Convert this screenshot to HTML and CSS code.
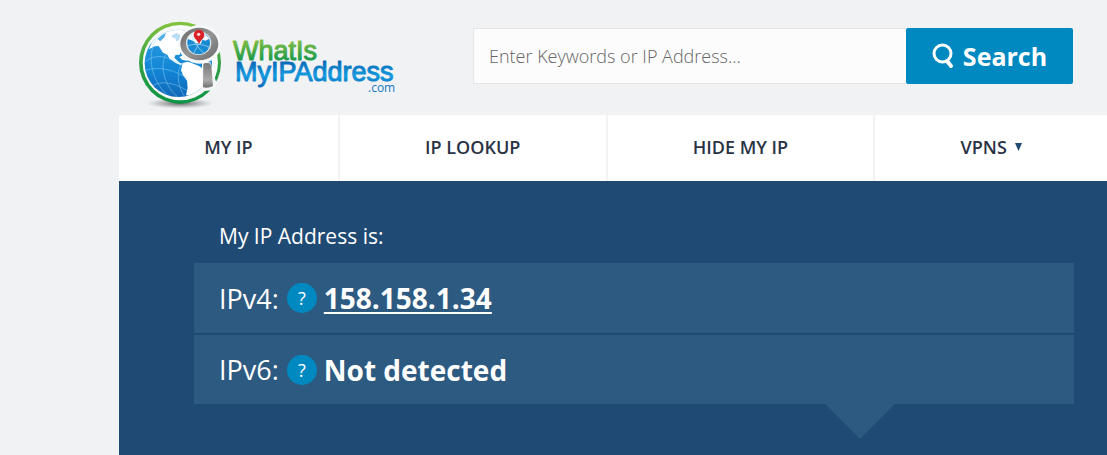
FILE: index.html
```html
<!DOCTYPE html>
<html lang="en">
<head>
<meta charset="utf-8">
<title>What Is My IP Address</title>
<link rel="stylesheet" href="styles.css">
</head>
<body>
<div class="page">
  <header class="header">
    <a class="logo" href="#" aria-label="WhatIsMyIPAddress.com">
      <svg class="logo-art" viewBox="0 0 275 100" width="275" height="100">
        <defs>
          <linearGradient id="ring" x1="0" y1="0" x2="0" y2="1"><stop offset="0" stop-color="#84c340"/><stop offset=".55" stop-color="#2f9f46"/><stop offset="1" stop-color="#0c9444"/></linearGradient>
          <linearGradient id="sea" x1="0" y1="0" x2="0" y2="1"><stop offset="0" stop-color="#2fa0e2"/><stop offset=".6" stop-color="#1285d6"/><stop offset="1" stop-color="#1268b8"/></linearGradient>
          <linearGradient id="metal" x1="0" y1="0" x2="1" y2="1"><stop offset="0" stop-color="#666"/><stop offset=".5" stop-color="#959595"/><stop offset="1" stop-color="#6b6b6b"/></linearGradient>
          <linearGradient id="grip" x1="0" y1="0" x2="0" y2="1"><stop offset="0" stop-color="#777"/><stop offset=".7" stop-color="#aaa"/><stop offset="1" stop-color="#707070"/></linearGradient>
          <linearGradient id="leaf" gradientUnits="userSpaceOnUse" x1="0" y1="25" x2="0" y2="46"><stop offset="0" stop-color="#82be42"/><stop offset="1" stop-color="#16984a"/></linearGradient>
          <linearGradient id="wave" gradientUnits="userSpaceOnUse" x1="0" y1="47" x2="0" y2="72"><stop offset="0" stop-color="#0969b7"/><stop offset=".55" stop-color="#139bdf"/><stop offset="1" stop-color="#0969b7"/></linearGradient>
          <radialGradient id="shade"><stop offset="0" stop-color="#555" stop-opacity=".9"/><stop offset=".5" stop-color="#777" stop-opacity=".5"/><stop offset="1" stop-color="#999" stop-opacity="0"/></radialGradient>
          <clipPath id="globe"><circle cx="145" cy="145" r="101"/></clipPath>
          <clipPath id="glass"><circle cx="206" cy="84" r="35"/></clipPath>
        </defs>
        <g transform="scale(.3333)">
          <ellipse cx="150" cy="265" rx="102" ry="16" fill="url(#shade)"/>
          <circle cx="150" cy="143" r="123" fill="url(#ring)"/>
          <circle cx="151" cy="143" r="113" fill="#f8f9fa"/>
          <circle cx="145" cy="145" r="101" fill="url(#sea)"/>
          <g clip-path="url(#globe)">
            <path d="M57 103 66 82 80 63 105 48 158 36 195 60 163 103 155 105 148 120 137 119 133 128 140 135 149 143 158 146 153 151 137 144 119 132 112 119 99 113 86 93 74 94Z" fill="#fff"/>
            <path d="M82 72 96 60 108 54 103 67 91 79Z" fill="#52afe3"/>
            <path d="M124 62 139 54 151 59 149 75 139 79 136 70 129 69Z" fill="#b9def3"/>
            <path d="M158 144 173 140 187 145 207 153 224 164 245 169 232 205 213 229 184 242 168 241 173 218 171 197 159 181 153 166Z" fill="#fff"/>
            <path d="M148 126 160 121 163 129 178 133 171 137 156 134Z" fill="#fff"/>
            <path d="M47 139C82 112 120 127 156 151M47 166C90 151 142 169 171 190M66 213C101 192 145 210 171 227M78 74C49 124 65 198 111 239M108 119C86 156 107 218 145 248M153 148C136 183 148 221 164 245" fill="none" stroke="#8ed2f3" stroke-width="2" opacity=".75"/>
          </g>
          <path d="M216 146Q218 138 241 142L259 203 254 225 216 229Z" fill="#f5f6f7"/>
          <path d="M220 147Q222 142 239 145L244 153 249 213Q236 220 219 217Z" fill="url(#grip)"/>
          <ellipse cx="209" cy="88" rx="64" ry="58" fill="#f7f8f9"/>
          <ellipse cx="208" cy="87" rx="57" ry="49" fill="url(#metal)"/>
          <ellipse cx="206" cy="84" rx="38" ry="36" fill="#e5e7e8"/>
          <circle cx="206" cy="84" r="34" fill="#198bd5"/>
          <g clip-path="url(#glass)">
            <path d="M172 71 184 52 220 50 238 71 226 77 217 74 213 86 198 85 188 77Z" fill="#f4f8fa"/>
            <path d="M171 93Q205 80 241 98M182 55Q196 95 226 118M232 55Q205 81 190 117" fill="none" stroke="#b2e0f5" stroke-width="2"/>
          </g>
          <path d="M207 88C204 76 191 71 191 60A16 16 0 0 1 223 60C223 71 210 76 207 88Z" fill="#d92128"/>
          <circle cx="206" cy="58" r="5" fill="#fbd5d5"/>
        </g>
        <text class="word green" x="103" y="45">WhatIs</text>
        <text class="word blue" x="105" y="66">MyIPAddress</text>
        <text class="suffix" x="238" y="77">.com</text>
      </svg>
    </a>
    <form class="search">
      <input class="search-box" type="text" aria-label="Search" placeholder="Enter Keywords or IP Address...">
      <button class="search-button" type="button">
        <svg width="22" height="26" viewBox="0 0 22 26" fill="none" stroke="#fff"><circle cx="10.500" cy="10.500" r="8.500" stroke-width="3"/><path d="M15 18 19 23" stroke-width="4" stroke-linecap="round"/></svg>
        <span>Search</span>
      </button>
    </form>
  </header>
  <nav class="nav">
    <a class="nav-item" href="#">MY IP</a>
    <a class="nav-item" href="#">IP LOOKUP</a>
    <a class="nav-item" href="#">HIDE MY IP</a>
    <a class="nav-item" href="#">VPNS <svg width="7" height="8" viewBox="0 0 7 8"><path d="M0 0H7L3.500 8Z" fill="#1f4a73"/></svg></a>
  </nav>
  <main class="hero">
    <h1 class="title">My IP Address is:</h1>
    <div class="rows">
      <div class="row"><span>IPv4:</span><button class="help" type="button" aria-label="About IPv4">?</button><a class="value" href="#">158.158.1.34</a></div>
      <div class="row last"><span>IPv6:</span><button class="help" type="button" aria-label="About IPv6">?</button><strong class="value">Not detected</strong></div>
    </div>
  </main>
</div>
</body>
</html>
```
FILE: styles.css
```css
* { box-sizing: border-box; }
body {
  margin: 0;
  background: #f1f2f4;
  font-family: "Open Sans", "Noto Sans", sans-serif;
  color: #2a3345;
}
.page {
  min-height: 100vh;
  padding-left: 119px;
  display: flex;
  flex-direction: column;
}
.header {
  display: flex;
  align-items: flex-start;
  padding: 15px 34px 0 11px;
}
.logo { flex: none; }
.logo-art { display: block; }
.word { font: 27px "Liberation Sans", Arial, sans-serif; stroke-width: 1px; stroke-linejoin: round; }
.green { fill: url(#leaf); stroke: url(#leaf); }
.blue { fill: url(#wave); stroke: url(#wave); }
.suffix { font: 12px "Open Sans", sans-serif; fill: #1679be; }
.search {
  flex: 1;
  display: flex;
  height: 56px;
  margin: 13px 0 0 68px;
}
.search-box {
  flex: 1;
  min-width: 0;
  padding: 0 15px;
  border: 1px solid #e5e5e5;
  border-right: 0;
  border-radius: 0;
  background: #fcfcfc;
  font: 300 18px "Open Sans", sans-serif;
  color: #333;
}
.search-box::placeholder { color: #666; opacity: 1; }
.search-button {
  display: flex;
  align-items: center;
  justify-content: center;
  gap: 9px;
  width: 167px;
  padding: 0;
  border: 0;
  border-radius: 2px;
  background: #0088c0;
  color: #fff;
  font: 700 25px "Open Sans", sans-serif;
}
.nav { display: flex; gap: 2px; }
.nav-item {
  flex: 1 1 auto;
  display: flex;
  align-items: center;
  justify-content: center;
  gap: 8px;
  height: 66px;
  padding-bottom: 2px;
  background: #fff;
  color: #2a3345;
  font-size: 18px;
  font-weight: 600;
  text-decoration: none;
  white-space: nowrap;
}
.hero {
  flex: 1;
  padding: 40px 33px 51px 75px;
  background: #1f4a73;
  color: #fff;
}
.title {
  margin: 0;
  padding: 0 25px 12px;
  font-size: 21px;
  font-weight: 400;
  line-height: 30px;
}
.rows { display: grid; gap: 2px; }
.row {
  display: flex;
  align-items: center;
  height: 70px;
  padding: 0 25px;
  background: #2d5a81;
  font-size: 27px;
}
.help {
  width: 30px;
  height: 30px;
  margin: 0 7px 0 8px;
  padding: 0;
  border: 0;
  border-radius: 50%;
  background: #0088c0;
  color: #fff;
  font: 18px "Open Sans", sans-serif;
}
.value { color: #fff; font-size: 28px; font-weight: 700; line-height: 36px; text-underline-offset: 3px; text-decoration-thickness: 2px; }
.last { position: relative; height: 69px; }
.last::after {
  content: "";
  position: absolute;
  top: 100%;
  right: 179px;
  border: 35px solid transparent;
  border-top-color: #2d5a81;
  border-bottom: 0;
}
```
